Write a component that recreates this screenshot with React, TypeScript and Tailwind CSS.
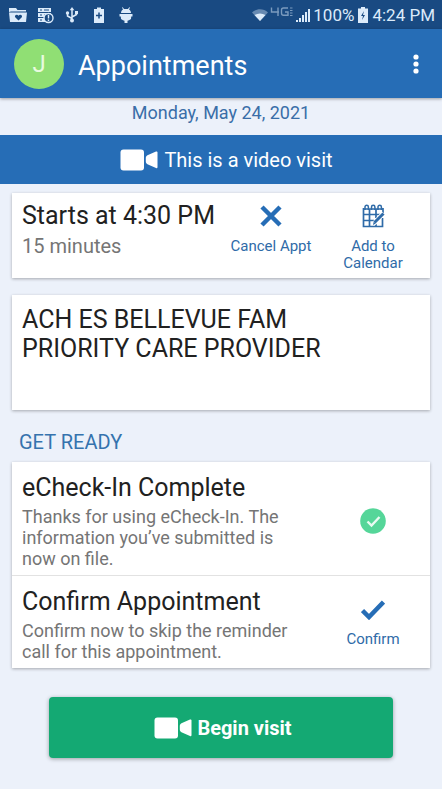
import * as React from 'react';

interface IconProps {
  className?: string;
}

function CameraIcon({ className }: IconProps) {
  return (
    <svg viewBox="0 0 38 22" className={className} fill="currentColor" aria-hidden="true">
      <rect x="0.5" y="0.5" width="23.5" height="21" rx="3" />
      <path d="M37.500 3.300v15c0 .8-.8 1.100-1.500.7l-8-3.500c-1.400-.6-2.200-1.500-2.200-3v-3.400c0-1.500.8-2.300 2.200-3l8-3.600c.7-.3 1.500 0 1.500.8z" />
    </svg>
  );
}

function CalendarIcon({ className }: IconProps) {
  return (
    <svg viewBox="0 0 24 26" className={className} fill="none" stroke="currentColor" aria-hidden="true">
      <path d="M2.500 6H22M2.500 5v18.500h19V15M22 5v5M2 11.500h18M2 17.500h11M8.500 6v17M15 6v9M15 19v4" strokeWidth="1.700" />
      <path d="M4 7V4a1.700 1.700 0 0 1 3.400 0v3M10.500 7V4a1.700 1.700 0 0 1 3.400 0v3M17 7V4a1.700 1.700 0 0 1 3.400 0v3" strokeWidth="1.500" />
      <path d="M13 20.500 22.500 10" stroke="white" strokeWidth="4.500" />
      <path d="m13.500 19.500 9-9" strokeWidth="3" />
      <path d="m12 22 .7-3.200 2 1.700z" fill="currentColor" stroke="none" />
    </svg>
  );
}

/** Notification icons on the left, signal, battery and clock on the right */
function StatusBar() {
  return (
    <div className="flex h-[29px] items-center justify-between bg-[#194a82] pl-2 pr-[7px] pt-px text-[#dcebfa]">
      <div className="flex items-center gap-2">
        <svg viewBox="0 0 20 18" className="h-[18px] w-5" fill="currentColor" aria-hidden="true">
          <path d="M1 2h7l1.500 2H18v1.500H3L1 6z" />
          <path d="M1 6.500h18L18 16H2z" />
          <path d="M10.500 14.500 7.200 11.200C6 9.500 9 7.500 10.500 9.700 12 7.500 15 9.500 13.800 11.200z" fill="#194a82" />
        </svg>
        <svg viewBox="0 0 18 18" className="h-[18px] w-[18px]" aria-hidden="true">
          <path d="M2 2h13v4H2zM2 7h13v4H2zM2 12h8v4H2z" fill="currentColor" />
          <path d="M4 4h2M4 9h2M4 14h2M8 4h5M8 9h2" stroke="#194a82" />
          <circle cx="12.500" cy="12" r="4.500" fill="#194a82" stroke="currentColor" strokeWidth="1.400" />
          <path d="M12.500 9v3.500M12.500 13.500V15" stroke="currentColor" strokeWidth="1.400" />
        </svg>
        <svg viewBox="0 0 14 18" className="ml-[3px] h-[18px] w-[14px]" fill="none" stroke="currentColor" strokeWidth="1.500" aria-hidden="true">
          <path d="M7 3v12M7 12.500 2.500 10V7M7 11l4.500-2.500V6" />
          <path d="m7 1 2.300 3.200H4.700z" fill="currentColor" stroke="none" />
          <circle cx="7" cy="14.500" r="2" fill="currentColor" stroke="none" />
          <circle cx="2.500" cy="7" r="1.700" fill="currentColor" stroke="none" />
          <path d="M10 5h3v3h-3z" fill="currentColor" stroke="none" />
        </svg>
        <svg viewBox="0 0 14 18" className="ml-[5px] h-[18px] w-[14px]" fill="currentColor" aria-hidden="true">
          <path d="M5 1.500h4V3h3v14H2V3h3z" />
          <path d="M7 6.500v6M4 9.500h6" stroke="#194a82" strokeWidth="1.500" />
        </svg>
        <svg viewBox="0 0 16 18" className="ml-1 h-[18px] w-4" fill="currentColor" aria-hidden="true">
          <path d="M3 7c0-2 1-3 2-3.500L4 1.500l.7-.3L6 3h4l1.300-1.800.7.300-1 2C12 4 13 5 13 7zM1.500 8h13v2.500h-1.300L13 13l-2 1.300-1.500.5V17h-3v-2.200L5 14.300 3 13l-.2-2.500H1.500z" />
        </svg>
      </div>

      <div className="flex items-center">
        <svg viewBox="0 0 18 16" className="mr-px h-4 w-[18px]" fill="currentColor" aria-hidden="true">
          <path d="M1 5.500C5.500 1.300 12.500 1.300 17 5.500L9 14z" opacity=".4" />
          <path d="M3.500 8C7 6 11 6 14.500 8L9 14z" />
        </svg>
        <svg viewBox="0 0 24 12" className="mb-[6px] h-3 w-6" fill="none" stroke="currentColor" strokeWidth="1.400" opacity=".5" role="img" aria-label="4G LTE">
          <path d="M1.500 1.500V6H9M8 1.500V10M18 2h-4.500c-2 0-2 1-2 2v3c0 1.500.5 2.300 2 2.300H18V6h-3" />
          <path d="M20 2h2.500M20 4.500h2.500M20 7h2.500M20 9.500h2.500" strokeWidth="1" />
        </svg>
        <svg viewBox="0 0 16 14" className="ml-[2px] h-[14px] w-4" fill="currentColor" aria-hidden="true">
          <path d="M0 12h2v2H0zM3 10h2v4H3zM6 7h2v7H6zM9 4h2v10H9zM12 1h2v13h-2z" />
        </svg>
        <span className="ml-px text-[17px] leading-6">100%</span>
        <svg viewBox="0 0 10 16" className="mx-1 h-4 w-[10px]" fill="currentColor" aria-hidden="true">
          <path d="M3 0h4v1.500h3V16H0V1.500h3z" />
          <path d="m6 4-3 5h2l-1 4 3-5H5z" fill="#194a82" />
        </svg>
        <span className="text-[17px] leading-6">4:24 PM</span>
      </div>
    </div>
  );
}

function AppHeader() {
  return (
    <header className="relative flex h-[69px] items-center bg-[#266db6] pl-[14px] pr-2 text-white shadow-[0_1px_3px_rgba(0,0,0,0.35)]">
      <div className="flex size-[50px] items-center justify-center rounded-full bg-[#90df74] text-2xl text-[#e8fadf]">
        J
      </div>
      <h1 className="ml-[14px] flex-1 pt-1 text-[27px] leading-8">Appointments</h1>
      <button type="button" aria-label="More options" className="flex h-10 w-9 items-center justify-center">
        <svg viewBox="0 0 6 22" className="h-[22px] w-[6px]" fill="currentColor" aria-hidden="true">
          <circle cx="3" cy="4" r="2.600" />
          <circle cx="3" cy="11" r="2.600" />
          <circle cx="3" cy="18" r="2.600" />
        </svg>
      </button>
    </header>
  );
}

interface CardProps {
  children: React.ReactNode;
  className?: string;
}

function Card({ children, className = '' }: CardProps) {
  return (
    <section className={`mx-3 bg-white shadow-[0_1px_3px_rgba(0,0,0,0.3)] ${className}`}>
      {children}
    </section>
  );
}

interface ActionButtonProps {
  icon: React.ReactNode;
  label: string;
  className?: string;
}

function ActionButton({ icon, label, className = '' }: ActionButtonProps) {
  return (
    <button
      type="button"
      className={`flex shrink-0 flex-col items-center text-[15px] leading-[17px] text-[#2f6ba8] ${className}`}
    >
      {icon}
      <span>{label}</span>
    </button>
  );
}

interface TaskRowProps {
  title: string;
  text: string;
  /** Status icon or button on the right */
  children: React.ReactNode;
}

function TaskRow({ title, text, children }: TaskRowProps) {
  return (
    <div className="flex items-center pb-[6px] pl-[10px] pr-3 pt-[10px]">
      <div className="flex-1">
        <h2 className="text-[25px] leading-8 text-[#212121]">{title}</h2>
        <p className="max-w-[280px] pt-[2px] text-lg leading-[21px] text-[#757575]">{text}</p>
      </div>
      <div className="flex w-[90px] justify-center">{children}</div>
    </div>
  );
}

export default function App() {
  return (
    <div className="min-h-screen bg-[#ecf1fa] pb-[30px] font-[Roboto,sans-serif]">
      <StatusBar />
      <AppHeader />

      <p className="h-[37px] pt-[3px] text-center text-lg leading-6 text-[#3a6ea8]">Monday, May 24, 2021</p>

      <div className="flex h-[49px] items-center justify-center gap-[6px] bg-[#266db6] pl-[11px] text-xl text-white">
        <CameraIcon className="h-[22px] w-[38px]" />
        This is a video visit
      </div>

      <main className="pt-[9px]">
        {/* Time and quick actions */}
        <Card className="flex min-h-[85px] items-start pl-[10px] pr-[22px] pt-2">
          <div className="flex-1">
            <h2 className="whitespace-nowrap text-[25px] leading-[30px] text-[#212121]">Starts at 4:30 PM</h2>
            <p className="text-xl leading-[30px] text-[#757575]">15 minutes</p>
          </div>
          <ActionButton
            label="Cancel Appt"
            className="w-[94px] pt-1"
            icon={
              <svg viewBox="0 0 22 22" className="mb-[11px] size-[22px]" stroke="#266db6" strokeWidth="4.500" aria-hidden="true">
                <path d="m2 2 18 18M20 2 2 20" />
              </svg>
            }
          />
          <ActionButton
            label="Add to Calendar"
            className="ml-5 w-[70px] pt-[2px]"
            icon={<CalendarIcon className="mb-[9px] h-[26px] w-6" />}
          />
        </Card>

        <Card className="mt-[17px] min-h-[115px] px-[10px] py-[10px]">
          <h2 className="max-w-[310px] text-[25px] leading-[29px] text-[#212121]">
            ACH ES BELLEVUE FAM PRIORITY CARE PROVIDER
          </h2>
        </Card>

        <h3 className="mb-2 mt-5 pl-[19px] text-xl leading-6 text-[#3573ae]">GET READY</h3>

        <Card className="divide-y divide-[#e2e2e2]">
          <TaskRow
            title="eCheck-In Complete"
            text="Thanks for using eCheck-In. The information you’ve submitted is now on file."
          >
            <svg viewBox="0 0 26 26" className="size-[26px]" role="img" aria-label="Complete">
              <circle cx="13" cy="13" r="12.800" fill="#55d699" />
              <path d="m7.500 13.500 4 4 8-8.500" fill="none" stroke="#e9fbf2" strokeWidth="2.400" />
            </svg>
          </TaskRow>

          <TaskRow
            title="Confirm Appointment"
            text="Confirm now to skip the reminder call for this appointment."
          >
            <ActionButton
              label="Confirm"
              icon={
                <svg viewBox="0 0 24 20" className="mb-[11px] h-5 w-6" fill="none" stroke="#266db6" strokeWidth="4.500" aria-hidden="true">
                  <path d="m1.500 10.500 6.500 6.500L22.500 2" />
                </svg>
              }
            />
          </TaskRow>
        </Card>

        <button
          type="button"
          className="mx-auto mt-[29px] flex h-[61px] w-7/9 items-center justify-center gap-[5px] rounded-[4px] bg-[#14a973] pl-1 text-xl font-bold text-white shadow-[0_1px_4px_rgba(0,0,0,0.35)]"
        >
          <CameraIcon className="h-[22px] w-[38px]" />
          Begin visit
        </button>
      </main>
    </div>
  );
}
